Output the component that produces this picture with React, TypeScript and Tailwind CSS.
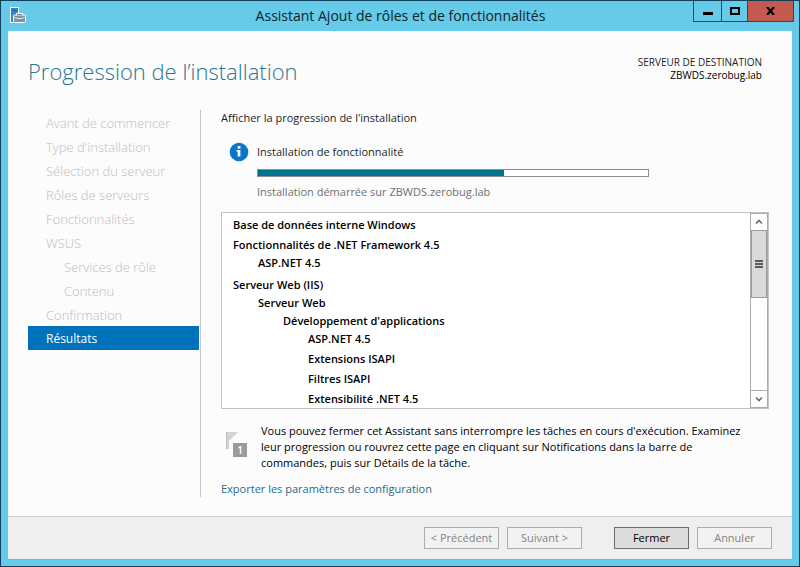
import clsx from "clsx"

interface Step {
  label: string;
  sub?: boolean;
  active?: boolean;
}

interface Feature {
  name: string;
  children?: Feature[];
}

const steps: Step[] = [
  { label: "Avant de commencer" },
  { label: "Type d'installation" },
  { label: "Sélection du serveur" },
  { label: "Rôles de serveurs" },
  { label: "Fonctionnalités" },
  { label: "WSUS" },
  { label: "Services de rôle", sub: true },
  { label: "Contenu", sub: true },
  { label: "Confirmation" },
  { label: "Résultats", active: true },
];

const features: Feature[] = [
  { name: "Base de données interne Windows" },
  { name: "Fonctionnalités de .NET Framework 4.5", children: [{ name: "ASP.NET 4.5" }] },
  {
    name: "Serveur Web (IIS)",
    children: [
      {
        name: "Serveur Web",
        children: [
          {
            name: "Développement d'applications",
            children: [
              { name: "ASP.NET 4.5" },
              { name: "Extensions ISAPI" },
              { name: "Filtres ISAPI" },
              { name: "Extensibilité .NET 4.5" },
            ],
          },
        ],
      },
    ],
  },
];

function ServerIcon() {
  return (
    <svg width="18" height="18" viewBox="0 0 18 18" aria-hidden="true">
      <rect x="1.5" y="1.5" width="8" height="15" fill="#2f86cf" stroke="#fff" />
      <path d="M3 4.5h5" stroke="#1c5fa0" />
      <path d="M7.5 9V7.500h6V9" fill="none" stroke="#fff" />
      <rect x="4.500" y="9" width="12" height="7.500" rx="1" fill="#7c93a3" stroke="#fff" />
      <path d="M8 8.500h5" stroke="#5f7787" />
      <path d="M5 11.500l4 1h3l4-1" fill="none" stroke="#dfe8ee" />
    </svg>
  )
}

function InfoIcon() {
  return (
    <svg width="20" height="20" viewBox="0 0 20 20" className="shrink-0" aria-hidden="true">
      <circle cx="10" cy="10" r="9.300" fill="#0a76cb" />
      <rect x="8.700" y="4" width="2.700" height="2.700" fill="#fff" />
      <path d="M7.500 8h3.900v6.500H8.700V9.500H7.500z" fill="#fff" />
    </svg>
  )
}

function FlagIcon() {
  return (
    <div className="relative h-7 w-6 shrink-0">
      <svg width="26" height="28" viewBox="0 0 26 28" aria-hidden="true">
        <path d="M5 1h12L8 10v8H5z" fill="#d4d4d4" />
        <path d="M5.500 1v17" stroke="#bdbdbd" />
        <rect x="12" y="12" width="14" height="14" fill="#9b9b9b" />
      </svg>
      <span className="absolute top-3 left-3 w-[14px] text-center text-[10px] leading-[14px] font-semibold text-white">1</span>
    </div>
  )
}

function FeatureTree({ items, nested }: { items: Feature[]; nested?: boolean }) {
  return (
    <ul className={clsx(nested && "pl-[25px]")}>
      {items.map((item) => (
        <li key={item.name} className="pb-[2px]">
          <div className="leading-[18px]">{item.name}</div>
          {item.children && <FeatureTree items={item.children} nested />}
        </li>
      ))}
    </ul>
  )
}

function ScrollBar() {
  return (
    <div className="flex w-[18px] shrink-0 flex-col border border-[#ababab]">
      <button type="button" aria-label="Défiler vers le haut" className="flex h-4 items-center justify-center bg-white">
        <svg width="8" height="6" viewBox="0 0 8 6"><path d="M1 4.500L4 1.500l3 3" fill="none" stroke="#6a6a6a" strokeWidth="1.600" /></svg>
      </button>
      <div className="flex h-[68px] flex-col items-center justify-center gap-px border border-[#9c9c9c] bg-[#dadada]">
        <span className="h-[2px] w-2 bg-[#5a5a5a]" />
        <span className="h-[2px] w-2 bg-[#5a5a5a]" />
        <span className="h-[2px] w-2 bg-[#5a5a5a]" />
      </div>
      <div className="flex-1 bg-white" />
      <button type="button" aria-label="Défiler vers le bas" className="flex h-[17px] items-center justify-center border-t border-[#ababab] bg-white">
        <svg width="8" height="6" viewBox="0 0 8 6"><path d="M1 1.500l3 3 3-3" fill="none" stroke="#6a6a6a" strokeWidth="1.600" /></svg>
      </button>
    </div>
  )
}

function FooterButton({ label, primary }: { label: string; primary?: boolean }) {
  return (
    <button
      type="button"
      disabled={!primary}
      className={clsx(
        "h-[22px] w-[75px] border whitespace-nowrap",
        primary ? "border-[#6c6c6c] bg-[#dcdcdc] text-black" : "border-[#adadad] bg-[#f2f2f2] text-[#838383]"
      )}
    >
      {label}
    </button>
  )
}

export default function App() {
  return (
    <div className="flex min-h-screen flex-col border border-[#12405a] bg-[#66cae9] px-[7px] pb-[6px] font-['Open_Sans',sans-serif] text-[11px] leading-4 text-[#1e1e1e]">
      <header className="flex h-[30px] items-start">
        <div className="flex flex-1 pt-[5px] pl-px"><ServerIcon /></div>
        <h1 className="pt-1 text-[14px] leading-[22px] text-[#10242d]">Assistant Ajout de rôles et de fonctionnalités</h1>
        <div className="flex flex-1 justify-end">
          <div className="-mr-[2px] flex h-[21px] border border-t-0 border-[#1f4c60]">
            <button type="button" aria-label="Réduire" className="flex w-[27px] items-center justify-center">
              <svg width="10" height="12" viewBox="0 0 10 12"><rect y="7" width="10" height="3" fill="#000" /></svg>
            </button>
            <button type="button" aria-label="Agrandir" className="flex w-[26px] items-center justify-center border-l border-[#1f4c60]">
              <svg width="10" height="8" viewBox="0 0 10 8"><rect x="1" y="1" width="8" height="6" fill="none" stroke="#000" strokeWidth="2" /></svg>
            </button>
            <button type="button" aria-label="Fermer la fenêtre" className="flex w-[46px] items-center justify-center border-l border-[#1f4c60] bg-[#c4594f]">
              <svg width="9" height="8" viewBox="0 0 9 8"><path d="M1 0l7 8M8 0L1 8" stroke="#000" strokeWidth="2.200" /></svg>
            </button>
          </div>
        </div>
      </header>

      <div className="flex flex-1 flex-col border-b border-[#9aa9ae] bg-[#fcfcfc]">
        <div className="flex items-start justify-between pt-6 pr-[30px] pl-5">
          <h2 className="text-[22px] leading-8 font-light text-[#2a7594]">Progression de l’installation</h2>
          <div className="pt-px text-right text-[10px] leading-[13px]">
            <div>SERVEUR DE DESTINATION</div>
            <div className="text-black">ZBWDS.zerobug.lab</div>
          </div>
        </div>

        <div className="flex flex-1 pt-[23px] pr-[23px] pb-[19px] pl-5">
          <nav className="w-[173px] shrink-0 border-r border-[#c4c4c4] pr-px">
            <ul>
              {steps.map((step) => (
                <li
                  key={step.label}
                  className={clsx(
                    "h-6 leading-[26px]",
                    step.sub ? "pl-9" : "pl-[18px]",
                    step.active ? "bg-[#0072bc] text-[12px] text-white" : "text-[13px] font-light text-[#bdbdbd]"
                  )}
                >
                  {step.label}
                </li>
              ))}
            </ul>
          </nav>

          <main className="min-w-0 flex-1 pl-5">
            <p>Afficher la progression de l'installation</p>

            <div className="flex gap-2 pt-4 pl-2">
              <InfoIcon />
              <div className="min-w-0 flex-1 pt-[2px] pr-[120px]">
                <p id="progress-label">Installation de fonctionnalité</p>
                <div
                  role="progressbar"
                  aria-labelledby="progress-label"
                  aria-valuenow={63}
                  className="mt-[9px] h-2 border border-[#8c8c8c] bg-white"
                >
                  <div className="h-full bg-[#00738f]" style={{ width: "63%" }} />
                </div>
                <p className="pt-[7px] text-[#6f6f6f]">Installation démarrée sur ZBWDS.zerobug.lab</p>
              </div>
            </div>

            <div className="mt-3 flex h-[197px] overflow-hidden border border-[#c3c3c3] bg-white">
              <div className="min-w-0 flex-1 overflow-hidden pt-[3px] pl-[11px] font-semibold text-black">
                <FeatureTree items={features} />
              </div>
              <ScrollBar />
            </div>

            <div className="flex gap-4 pt-[14px] pr-4 text-black">
              <div className="pt-2"><FlagIcon /></div>
              <p>
                Vous pouvez fermer cet Assistant sans interrompre les tâches en cours d'exécution. Examinez
                leur progression ou rouvrez cette page en cliquant sur Notifications dans la barre de
                commandes, puis sur Détails de la tâche.
              </p>
            </div>

            <p className="pt-[10px]">
              <a href="#export" className="text-[#1c6c8c]">Exporter les paramètres de configuration</a>
            </p>
          </main>
        </div>

        <footer className="flex justify-end gap-8 border-t border-[#d4d4d4] bg-[#efefef] px-5 py-[10px]">
          <div className="flex gap-2">
            <FooterButton label="< Précédent" />
            <FooterButton label="Suivant >" />
          </div>
          <div className="flex gap-2">
            <FooterButton label="Fermer" primary />
            <FooterButton label="Annuler" />
          </div>
        </footer>
      </div>
    </div>
  )
}
